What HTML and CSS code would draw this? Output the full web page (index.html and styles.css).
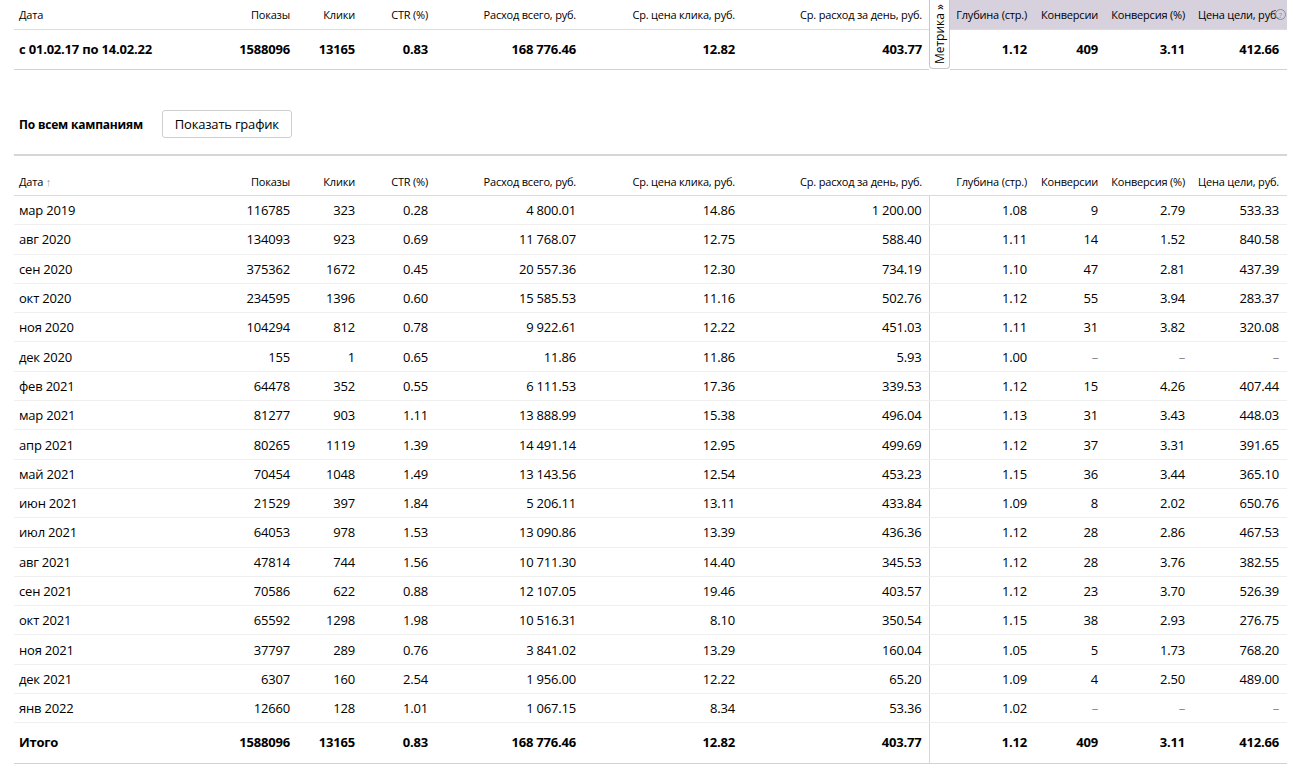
FILE: index.html
```html
<!DOCTYPE html>
<html lang="ru">
<head>
<meta charset="utf-8">
<title>Статистика</title>
<link rel="stylesheet" href="styles.css">
</head>
<body>
<div class="page">
  <table class="grid summary">
    <colgroup>
      <col class="c-date"><col class="c-shows"><col class="c-clicks"><col class="c-ctr"><col class="c-spend"><col class="c-cpc"><col class="c-day"><col class="c-metrika"><col class="c-depth"><col class="c-conv"><col class="c-convp"><col class="c-goal">
    </colgroup>
    <tbody>
      <tr class="head">
        <th class="l">Дата</th>
        <th>Показы</th>
        <th>Клики</th>
        <th>CTR (%)</th>
        <th>Расход всего, руб.</th>
        <th>Ср. цена клика, руб.</th>
        <th class="day">Ср. расход за день, руб.</th>
        <th class="metrika-cell" rowspan="2"><div class="metrika-tab"><span>Метрика »</span></div></th>
        <th class="m">Глубина (стр.)</th>
        <th class="m">Конверсии</th>
        <th class="m">Конверсия (%)</th>
        <th class="m goal">Цена цели, руб.<span class="help">?</span></th>
      </tr>
      <tr class="total">
        <td class="l">с 01.02.17 по 14.02.22</td>
        <td>1588096</td>
        <td>13165</td>
        <td>0.83</td>
        <td>168 776.46</td>
        <td>12.82</td>
        <td class="day">403.77</td>
        <td>1.12</td>
        <td>409</td>
        <td>3.11</td>
        <td class="goal">412.66</td>
      </tr>
    </tbody>
  </table>

  <div class="section-bar">
    <span class="section-title">По всем кампаниям</span>
    <button class="btn" type="button">Показать график</button>
  </div>

  <table class="grid detail">
    <colgroup>
      <col class="c-date"><col class="c-shows"><col class="c-clicks"><col class="c-ctr"><col class="c-spend"><col class="c-cpc"><col class="c-day"><col class="c-metrika"><col class="c-depth"><col class="c-conv"><col class="c-convp"><col class="c-goal">
    </colgroup>
    <thead>
      <tr class="head">
        <th class="l">Дата <span class="sort">↑</span></th>
        <th>Показы</th>
        <th>Клики</th>
        <th>CTR (%)</th>
        <th>Расход всего, руб.</th>
        <th>Ср. цена клика, руб.</th>
        <th class="day">Ср. расход за день, руб.</th>
        <th class="sep-head"></th>
        <th>Глубина (стр.)</th>
        <th>Конверсии</th>
        <th>Конверсия (%)</th>
        <th class="goal">Цена цели, руб.</th>
      </tr>
    </thead>
    <tbody>
      <tr><td class="l">мар 2019</td><td>116785</td><td>323</td><td>0.28</td><td>4 800.01</td><td>14.86</td><td class="day">1 200.00</td><td class="sep"></td><td>1.08</td><td>9</td><td>2.79</td><td class="goal">533.33</td></tr>
      <tr><td class="l">авг 2020</td><td>134093</td><td>923</td><td>0.69</td><td>11 768.07</td><td>12.75</td><td class="day">588.40</td><td class="sep"></td><td>1.11</td><td>14</td><td>1.52</td><td class="goal">840.58</td></tr>
      <tr><td class="l">сен 2020</td><td>375362</td><td>1672</td><td>0.45</td><td>20 557.36</td><td>12.30</td><td class="day">734.19</td><td class="sep"></td><td>1.10</td><td>47</td><td>2.81</td><td class="goal">437.39</td></tr>
      <tr><td class="l">окт 2020</td><td>234595</td><td>1396</td><td>0.60</td><td>15 585.53</td><td>11.16</td><td class="day">502.76</td><td class="sep"></td><td>1.12</td><td>55</td><td>3.94</td><td class="goal">283.37</td></tr>
      <tr><td class="l">ноя 2020</td><td>104294</td><td>812</td><td>0.78</td><td>9 922.61</td><td>12.22</td><td class="day">451.03</td><td class="sep"></td><td>1.11</td><td>31</td><td>3.82</td><td class="goal">320.08</td></tr>
      <tr><td class="l">дек 2020</td><td>155</td><td>1</td><td>0.65</td><td>11.86</td><td>11.86</td><td class="day">5.93</td><td class="sep"></td><td>1.00</td><td class="na">–</td><td class="na">–</td><td class="goal na">–</td></tr>
      <tr><td class="l">фев 2021</td><td>64478</td><td>352</td><td>0.55</td><td>6 111.53</td><td>17.36</td><td class="day">339.53</td><td class="sep"></td><td>1.12</td><td>15</td><td>4.26</td><td class="goal">407.44</td></tr>
      <tr><td class="l">мар 2021</td><td>81277</td><td>903</td><td>1.11</td><td>13 888.99</td><td>15.38</td><td class="day">496.04</td><td class="sep"></td><td>1.13</td><td>31</td><td>3.43</td><td class="goal">448.03</td></tr>
      <tr><td class="l">апр 2021</td><td>80265</td><td>1119</td><td>1.39</td><td>14 491.14</td><td>12.95</td><td class="day">499.69</td><td class="sep"></td><td>1.12</td><td>37</td><td>3.31</td><td class="goal">391.65</td></tr>
      <tr><td class="l">май 2021</td><td>70454</td><td>1048</td><td>1.49</td><td>13 143.56</td><td>12.54</td><td class="day">453.23</td><td class="sep"></td><td>1.15</td><td>36</td><td>3.44</td><td class="goal">365.10</td></tr>
      <tr><td class="l">июн 2021</td><td>21529</td><td>397</td><td>1.84</td><td>5 206.11</td><td>13.11</td><td class="day">433.84</td><td class="sep"></td><td>1.09</td><td>8</td><td>2.02</td><td class="goal">650.76</td></tr>
      <tr><td class="l">июл 2021</td><td>64053</td><td>978</td><td>1.53</td><td>13 090.86</td><td>13.39</td><td class="day">436.36</td><td class="sep"></td><td>1.12</td><td>28</td><td>2.86</td><td class="goal">467.53</td></tr>
      <tr><td class="l">авг 2021</td><td>47814</td><td>744</td><td>1.56</td><td>10 711.30</td><td>14.40</td><td class="day">345.53</td><td class="sep"></td><td>1.12</td><td>28</td><td>3.76</td><td class="goal">382.55</td></tr>
      <tr><td class="l">сен 2021</td><td>70586</td><td>622</td><td>0.88</td><td>12 107.05</td><td>19.46</td><td class="day">403.57</td><td class="sep"></td><td>1.12</td><td>23</td><td>3.70</td><td class="goal">526.39</td></tr>
      <tr><td class="l">окт 2021</td><td>65592</td><td>1298</td><td>1.98</td><td>10 516.31</td><td>8.10</td><td class="day">350.54</td><td class="sep"></td><td>1.15</td><td>38</td><td>2.93</td><td class="goal">276.75</td></tr>
      <tr><td class="l">ноя 2021</td><td>37797</td><td>289</td><td>0.76</td><td>3 841.02</td><td>13.29</td><td class="day">160.04</td><td class="sep"></td><td>1.05</td><td>5</td><td>1.73</td><td class="goal">768.20</td></tr>
      <tr><td class="l">дек 2021</td><td>6307</td><td>160</td><td>2.54</td><td>1 956.00</td><td>12.22</td><td class="day">65.20</td><td class="sep"></td><td>1.09</td><td>4</td><td>2.50</td><td class="goal">489.00</td></tr>
      <tr><td class="l">янв 2022</td><td>12660</td><td>128</td><td>1.01</td><td>1 067.15</td><td>8.34</td><td class="day">53.36</td><td class="sep"></td><td>1.02</td><td class="na">–</td><td class="na">–</td><td class="goal na">–</td></tr>
    </tbody>
    <tfoot>
      <tr class="total"><td class="l">Итого</td><td>1588096</td><td>13165</td><td>0.83</td><td>168 776.46</td><td>12.82</td><td class="day">403.77</td><td class="sep"></td><td>1.12</td><td>409</td><td>3.11</td><td class="goal">412.66</td></tr>
    </tfoot>
  </table>
</div>
</body>
</html>
```

FILE: styles.css
```css
* { box-sizing: border-box; }

html, body {
  margin: 0;
  padding: 0;
  background: #fff;
}

body {
  font-family: "Open Sans", "Noto Sans", Arial, sans-serif;
  color: #000;
  font-size: 13px;
}

.page {
  padding: 0 16px 0 14px;
  width: 1303px;
}

.grid {
  width: 1273px;
  table-layout: fixed;
  border-collapse: collapse;
  border-spacing: 0;
}

.c-date { width: 186px; }
.c-shows { width: 95px; }
.c-clicks { width: 65px; }
.c-ctr { width: 73px; }
.c-spend { width: 148px; }
.c-cpc { width: 159px; }
.c-day { width: 189px; }
.c-metrika { width: 21px; }
.c-depth { width: 82px; }
.c-conv { width: 71px; }
.c-convp { width: 87px; }
.c-goal { width: 97px; }

.grid th,
.grid td {
  padding: 0 5px;
  text-align: right;
  white-space: nowrap;
  overflow: visible;
}

.grid th {
  font-size: 11px;
  font-weight: 400;
  letter-spacing: -0.2px;
}

.grid td {
  font-size: 13px;
  letter-spacing: -0.2px;
}

.grid .l { text-align: left; }
.grid .day { padding-right: 7px; }
.grid .goal { padding-right: 8px; }

/* summary table */
.summary .head th {
  height: 29px;
  border-bottom: 1px solid #dcdcdc;
  vertical-align: middle;
}

.summary .head th.m {
  background: #d7d1de;
}

.summary .head th.goal {
  position: relative;
}

.help {
  position: absolute;
  right: 1px;
  top: 9px;
  width: 11px;
  height: 11px;
  border: 1px solid #8e8a94;
  border-radius: 50%;
  font-size: 8px;
  line-height: 9px;
  text-align: center;
  color: #8e8a94;
  letter-spacing: 0;
}

.summary .total td {
  height: 39px;
  font-weight: 700;
  border-bottom: 1px solid #d2d2d2;
}

.summary .head th.metrika-cell {
  padding: 0;
  height: auto;
  vertical-align: top;
  border-bottom: none;
  background: transparent;
}

.metrika-tab {
  width: 21px;
  height: 69px;
  border: 1px solid #c8c8c8;
  border-top: none;
  border-radius: 0 0 4px 4px;
  background: #fff;
  display: flex;
  align-items: center;
  justify-content: center;
}

.metrika-tab span {
  writing-mode: vertical-rl;
  transform: rotate(180deg);
  font-size: 12px;
  letter-spacing: 0;
  color: #000;
}

/* section bar */
.section-bar {
  display: flex;
  align-items: center;
  gap: 19px;
  margin-top: 40px;
  padding-left: 5px;
  height: 29px;
}

.section-title {
  font-size: 12px;
  font-weight: 700;
  letter-spacing: -0.2px;
}

.btn {
  font-family: inherit;
  font-size: 13px;
  letter-spacing: -0.2px;
  color: #000;
  background: #fff;
  border: 1px solid #cfcfcf;
  border-radius: 3px;
  height: 28px;
  padding: 0 12px;
}

/* detail table */
.detail {
  margin-top: 15px;
  border-top: 2px solid #d6d6d6;
}

.detail .head th {
  height: 41px;
  vertical-align: bottom;
  padding-bottom: 6px;
  border-bottom: 1px solid #dadada;
}

.sort {
  color: #999;
  font-size: 11px;
}

.detail tbody td {
  height: 29.3px;
  border-bottom: 1px solid #efefef;
  vertical-align: middle;
}

.detail tbody td.sep,
.detail tfoot td.sep {
  border-left: 1px solid #d6d6d6;
  padding: 0;
}

.detail tfoot td {
  height: 41px;
  font-weight: 700;
  border-bottom: 1px solid #d2d2d2;
  vertical-align: middle;
  padding-bottom: 3px;
}

.na {
  color: #8c8c8c;
}
```
